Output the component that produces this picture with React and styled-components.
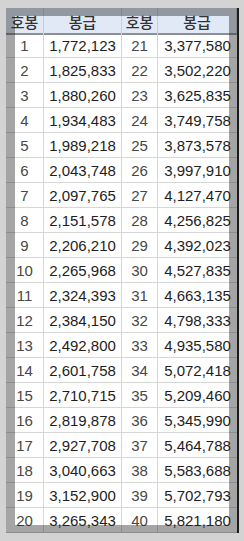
import React from "react";
import styled, { createGlobalStyle } from "styled-components";

const Global = createGlobalStyle`
  html, body { margin: 0; padding: 0; background: #d3d3d3; }
  body { font-family: "Liberation Sans", Arial, "Noto Sans CJK KR", sans-serif; }
`;

const rows = [
  [1, "1,772,123", 21, "3,377,580"],
  [2, "1,825,833", 22, "3,502,220"],
  [3, "1,880,260", 23, "3,625,835"],
  [4, "1,934,483", 24, "3,749,758"],
  [5, "1,989,218", 25, "3,873,578"],
  [6, "2,043,748", 26, "3,997,910"],
  [7, "2,097,765", 27, "4,127,470"],
  [8, "2,151,578", 28, "4,256,825"],
  [9, "2,206,210", 29, "4,392,023"],
  [10, "2,265,968", 30, "4,527,835"],
  [11, "2,324,393", 31, "4,663,135"],
  [12, "2,384,150", 32, "4,798,333"],
  [13, "2,492,800", 33, "4,935,580"],
  [14, "2,601,758", 34, "5,072,418"],
  [15, "2,710,715", 35, "5,209,460"],
  [16, "2,819,878", 36, "5,345,990"],
  [17, "2,927,708", 37, "5,464,788"],
  [18, "3,040,663", 38, "5,583,688"],
  [19, "3,152,900", 39, "5,702,793"],
  [20, "3,265,343", 40, "5,821,180"],
];

const Page = styled.div`
  padding: 8px 0 0 6px;
`;

const Frame = styled.div`
  position: relative;
  display: inline-block;
  border-right: 2px solid #1c1c1c;
`;

const Table = styled.div`
  display: grid;
  grid-template-columns: 38px 78px 36px 79px;
  grid-auto-rows: 25px;
  background: #ffffff;
`;

const HeadCell = styled.div`
  height: 24px;
  display: flex;
  align-items: center;
  justify-content: center;
  background: #e1e8f6;
  border-right: 1px solid #c9ced8;
  border-bottom: 2px solid #8c8f94;
  font-family: "Noto Sans CJK KR", "Liberation Sans", sans-serif;
  font-size: 15px;
  font-weight: 500;
  color: #333333;
  padding-top: 1px;
  box-sizing: content-box;
  &:last-child { border-right: none; }
`;

const Cell = styled.div`
  display: flex;
  align-items: center;
  justify-content: center;
  border-right: ${(p) => (p.$last ? "none" : "1px solid #d6d6d6")};
  border-bottom: 1px solid #d6d6d6;
  font-size: 15px;
  color: ${(p) => (p.$index ? "#474747" : "#1e1e1e")};
  padding-top: 1px;
`;

const Shade = styled.div`
  position: absolute;
  inset: 0;
  pointer-events: none;
  border-style: solid;
  border-color: rgba(30, 30, 30, 0.4);
  border-width: 8px 8px 8px 9px;
`;

export default function App() {
  return (
    <>
      <Global />
      <Page>
        <Frame>
          <Table>
            <HeadCell>호봉</HeadCell>
            <HeadCell>봉급</HeadCell>
            <HeadCell>호봉</HeadCell>
            <HeadCell>봉급</HeadCell>
            {rows.map((r) => (
              <React.Fragment key={r[0]}>
                <Cell $index>{r[0]}</Cell>
                <Cell>{r[1]}</Cell>
                <Cell $index>{r[2]}</Cell>
                <Cell $last>{r[3]}</Cell>
              </React.Fragment>
            ))}
          </Table>
          <Shade />
        </Frame>
      </Page>
    </>
  );
}
